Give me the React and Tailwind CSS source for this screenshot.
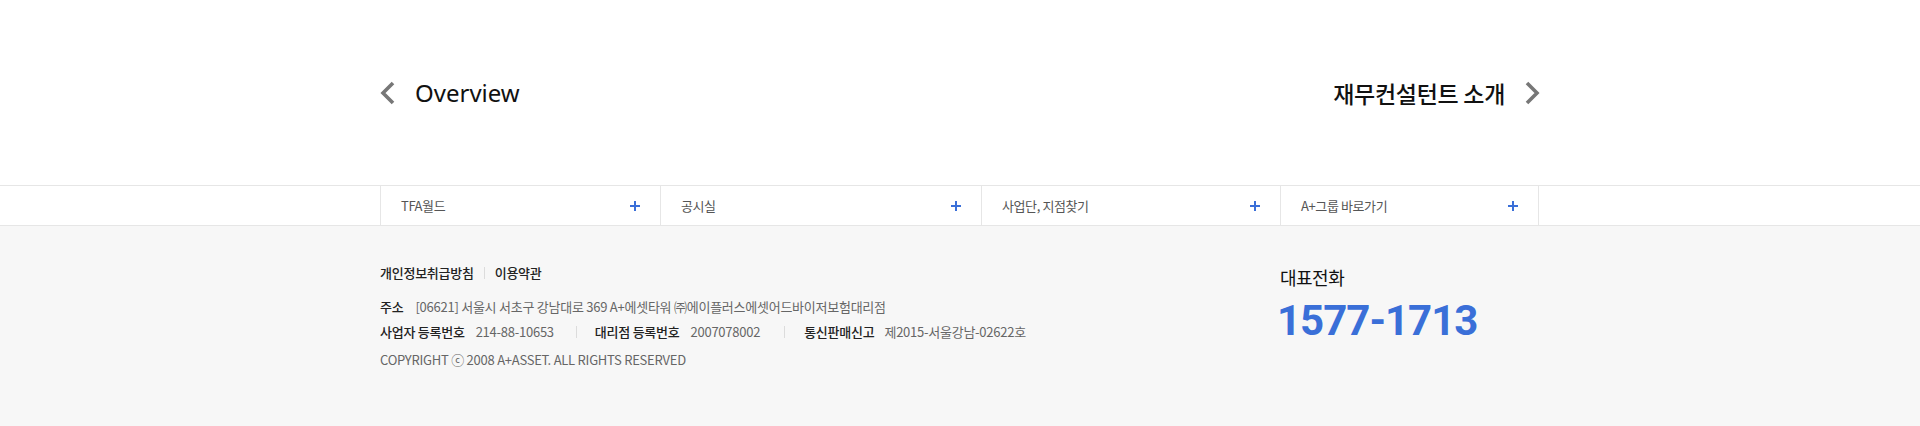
import React from "react";

const KR = "font-['Noto_Sans_CJK_KR','Noto_Sans',sans-serif]";

function Plus() {
  return (
    <svg width="10" height="10" viewBox="0 0 10 10" className="shrink-0">
      <rect x="4" y="0" width="2" height="10" fill="#3a6fd8" />
      <rect x="0" y="4" width="10" height="2" fill="#3a6fd8" />
    </svg>
  );
}

function Chevron({ dir }) {
  return (
    <svg width="16" height="24" viewBox="0 0 16 24" className="shrink-0">
      {dir === "left" ? (
        <polyline points="13,2 3,12 13,22" fill="none" stroke="#777" strokeWidth="3.6" />
      ) : (
        <polyline points="3,2 13,12 3,22" fill="none" stroke="#777" strokeWidth="3.6" />
      )}
    </svg>
  );
}

const cols = [
  { label: "TFA월드", w: "w-[280px]" },
  { label: "공시실", w: "w-[321px]" },
  { label: "사업단, 지점찾기", w: "w-[299px]" },
  { label: "A+그룹 바로가기", w: "w-[259px]" },
];

function Sep({ cls }) {
  return <span className={"inline-block w-px h-[12px] bg-[#dcdcdc] " + cls} />;
}

export default function App() {
  return (
    <div className={"w-full bg-white " + KR}>
      {/* prev / next */}
      <div className="h-[185px]">
        <div className="w-[1160px] mx-auto h-full flex items-center justify-between pt-px">
          <div className="flex items-center">
            <Chevron dir="left" />
            <span className="ml-[19px] font-['Noto_Sans',sans-serif] text-[24px] leading-none text-[#111]">
              Overview
            </span>
          </div>
          <div className="flex items-center">
            <span className="text-[23px] leading-none tracking-[-0.3px] text-[#111] font-medium">
              재무컨설턴트 소개
            </span>
            <span className="ml-[19px]">
              <Chevron dir="right" />
            </span>
          </div>
        </div>
      </div>

      {/* quick bar */}
      <div className="h-[41px] border-t border-b border-[#e6e6e6]">
        <div className="w-[1160px] mx-auto h-full flex">
          {cols.map((c, i) => (
            <div
              key={c.label}
              className={
                c.w +
                " shrink-0 h-full border-l border-[#e6e6e6] " +
                (i === cols.length - 1 ? "border-r" : "")
              }
            >
              <div className="h-full mx-[20px] flex items-center justify-between">
                <span className="text-[13px] tracking-[-0.4px] text-[#555]">{c.label}</span>
                <Plus />
              </div>
            </div>
          ))}
        </div>
      </div>

      {/* footer */}
      <div className="h-[200px] bg-[#f7f7f7]">
        <div className="w-[1160px] mx-auto flex">
          <div className="w-[900px] shrink-0 pt-[32px] text-[13px] tracking-[-0.25px]">
            <div className="h-[30px] flex items-center text-[#222] font-medium">
              <span>개인정보취급방침</span>
              <Sep cls="mx-[10px]" />
              <span>이용약관</span>
            </div>
            <div className="h-[24px] mt-[7px] flex items-center">
              <span className="text-[#222] font-medium">주소</span>
              <span className="ml-[12px] text-[#666]">
                [06621] 서울시 서초구 강남대로 369 A+에셋타워 ㈜에이플러스에셋어드바이저보험대리점
              </span>
            </div>
            <div className="h-[26px] flex items-center">
              <span className="text-[#222] font-medium">사업자 등록번호</span>
              <span className="ml-[11px] text-[#666]">214-88-10653</span>
              <Sep cls="ml-[22px] mr-[18px]" />
              <span className="text-[#222] font-medium">대리점 등록번호</span>
              <span className="ml-[11px] text-[#666]">2007078002</span>
              <Sep cls="ml-[24px] mr-[19px]" />
              <span className="text-[#222] font-medium">통신판매신고</span>
              <span className="ml-[10px] text-[#666]">제2015-서울강남-02622호</span>
            </div>
            <div className="h-[30px] flex items-center text-[#666]">
              COPYRIGHT ⓒ 2008 A+ASSET. ALL RIGHTS RESERVED
            </div>
          </div>
          <div className="pt-[39px]">
            <div className="text-[18px] leading-[24px] tracking-[-0.5px] text-[#111]">대표전화</div>
            <div className="mt-[10px] -ml-[3px] font-['Roboto',sans-serif] font-bold text-[42px] leading-[44px] tracking-[-1px] text-[#3a6fd8]">
              1577-1713
            </div>
          </div>
        </div>
      </div>
    </div>
  );
}
